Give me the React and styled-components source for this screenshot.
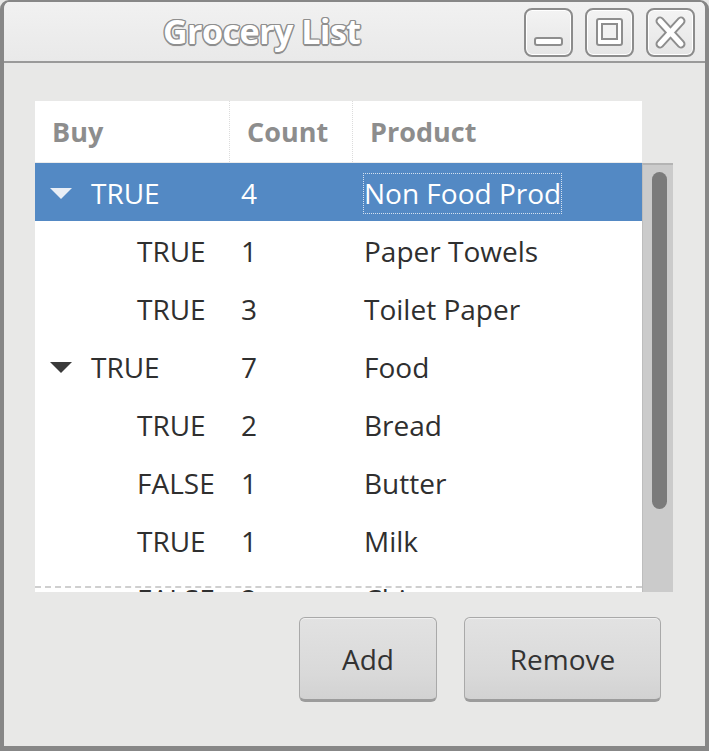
import React from "react";
import styled, { createGlobalStyle } from "styled-components";

const GlobalStyle = createGlobalStyle`
  html, body {
    margin: 0;
    padding: 0;
    background: #e8e8e7;
  }
  * { box-sizing: border-box; }
`;

const items = [
  { buy: "TRUE", count: 4, product: "Non Food Prod", level: 0, open: true, selected: true },
  { buy: "TRUE", count: 1, product: "Paper Towels", level: 1 },
  { buy: "TRUE", count: 3, product: "Toilet Paper", level: 1 },
  { buy: "TRUE", count: 7, product: "Food", level: 0, open: true },
  { buy: "TRUE", count: 2, product: "Bread", level: 1 },
  { buy: "FALSE", count: 1, product: "Butter", level: 1 },
  { buy: "TRUE", count: 1, product: "Milk", level: 1 },
  { buy: "FALSE", count: 2, product: "Chips", level: 1 },
];

function App() {
  return (
    <>
      <GlobalStyle />
      <Window>
        <TitleBar>
          <Title>Grocery List</Title>
          <Controls>
            <CtrlButton>
              <svg width="45" height="45" viewBox="0 0 45 45">
                <rect x="9" y="28" width="27" height="7" rx="2" fill="#fff" stroke="#8e8e8e" strokeWidth="2" />
              </svg>
            </CtrlButton>
            <CtrlButton>
              <svg width="45" height="45" viewBox="0 0 45 45">
                <rect x="10" y="9" width="25" height="26" rx="2" fill="#fff" stroke="#8e8e8e" strokeWidth="2" />
                <rect x="15" y="14" width="15" height="15" fill="#f2f2f2" stroke="#8e8e8e" strokeWidth="2" />
              </svg>
            </CtrlButton>
            <CtrlButton>
              <svg width="45" height="45" viewBox="0 0 45 45">
                <path d="M12 11 L33 34 M33 11 L12 34" stroke="#8e8e8e" strokeWidth="9" strokeLinecap="round" />
                <path d="M12 11 L33 34 M33 11 L12 34" stroke="#fff" strokeWidth="5" strokeLinecap="round" />
              </svg>
            </CtrlButton>
          </Controls>
        </TitleBar>

        <Body>
          <Tree>
            <Header>
              <HeadCell>Buy</HeadCell>
              <HeadCell>Count</HeadCell>
              <HeadCell $last>Product</HeadCell>
            </Header>
            <Viewport>
              {items.map((it, i) => (
                <Row key={i} $selected={it.selected}>
                  <BuyCell $level={it.level}>
                    <Arrow $selected={it.selected}>
                      {it.open && (
                        <svg width="22" height="11" viewBox="0 0 22 11">
                          <path d="M0 0 L22 0 L11 11 Z" fill="currentColor" />
                        </svg>
                      )}
                    </Arrow>
                    {it.buy}
                  </BuyCell>
                  <Cell>{it.count}</Cell>
                  <Cell>
                    <Label $focus={it.selected}>{it.product}</Label>
                  </Cell>
                </Row>
              ))}
            </Viewport>
            <Scrollbar>
              <Thumb />
            </Scrollbar>
          </Tree>

          <Actions>
            <PushButton $w={138}>Add</PushButton>
            <PushButton $w={197}>Remove</PushButton>
          </Actions>
        </Body>
      </Window>
    </>
  );
}

export default App;

const Window = styled.div`
  width: 709px;
  height: 751px;
  display: flex;
  flex-direction: column;
  background: #e8e8e7;
  border: 2px solid #878787;
  border-left-width: 4px;
  border-right-width: 4px;
  border-bottom-width: 5px;
  border-radius: 9px 9px 0 0;
  overflow: hidden;
  font-family: "Open Sans", "Noto Sans", sans-serif;
`;

const TitleBar = styled.div`
  height: 61px;
  flex: none;
  display: flex;
  align-items: center;
  justify-content: space-between;
  padding: 0 10px 0 159px;
  background: linear-gradient(#f1f1f1, #e9e9e9);
  border-bottom: 2px solid #9a9a9a;
`;

const Title = styled.div`
  font-family: "Open Sans", "Noto Sans", sans-serif;
  font-weight: 700;
  font-size: 34px;
  letter-spacing: -0.5px;
  color: #fff;
  margin-top: -1px;
  text-shadow:
    1.5px 0 0 #8f8f8f, -1.5px 0 0 #8f8f8f, 0 1.5px 0 #8f8f8f, 0 -1.5px 0 #8f8f8f,
    1px 1px 0 #8f8f8f, -1px -1px 0 #8f8f8f, 1px -1px 0 #8f8f8f, -1px 1px 0 #8f8f8f,
    0 2px 1px #b0b0b0;
`;

const Controls = styled.div`
  display: flex;
  gap: 12px;
  margin-top: 2px;
`;

const CtrlButton = styled.div`
  width: 49px;
  height: 49px;
  border: 2px solid #8c8c8c;
  border-radius: 8px;
  background: linear-gradient(#f3f3f3, #e6e6e6);
  box-shadow: inset 0 0 0 1px #fff;
  display: flex;
  align-items: center;
  justify-content: center;
`;

const Body = styled.div`
  flex: 1;
  display: flex;
  flex-direction: column;
  padding: 38px 0 0 31px;
`;

const Tree = styled.div`
  display: grid;
  grid-template-columns: 607px 31px;
  grid-template-rows: 62px 429px;
`;

const Header = styled.div`
  grid-column: 1;
  grid-row: 1;
  display: grid;
  grid-template-columns: 195px 123px 1fr;
  background: #fff;
  border-bottom: 1px solid #ececec;
`;

const HeadCell = styled.div`
  display: flex;
  align-items: center;
  padding-left: 17px;
  font-size: 27px;
  font-weight: 700;
  color: #8d8d8d;
  border-right: ${(p) => (p.$last ? "none" : "1px dotted #dcdcdc")};
`;

const Viewport = styled.div`
  grid-column: 1;
  grid-row: 2;
  position: relative;
  overflow: hidden;
  background: #fff;
  &::after {
    content: "";
    position: absolute;
    left: 0;
    right: 0;
    bottom: 4px;
    border-bottom: 2px dashed #cfcfcf;
  }
`;

const Row = styled.div`
  height: 58px;
  padding-top: 2px;
  display: grid;
  grid-template-columns: 195px 123px 1fr;
  align-items: center;
  font-size: 28px;
  color: ${(p) => (p.$selected ? "#fff" : "#2f2f2f")};
  background: ${(p) => (p.$selected ? "#5389c4" : "transparent")};
`;

const BuyCell = styled.div`
  display: flex;
  align-items: center;
  padding-left: ${(p) => 15 + p.$level * 46}px;
`;

const Arrow = styled.span`
  width: 22px;
  height: 11px;
  margin-right: 19px;
  display: flex;
  color: ${(p) => (p.$selected ? "#e8eef6" : "#3a3a3a")};
`;

const Cell = styled.div`
  padding-left: 11px;
`;

const Label = styled.span`
  display: inline-block;
  line-height: 39px;
  outline: ${(p) => (p.$focus ? "1px dotted rgba(255,255,255,0.75)" : "none")};
  outline-offset: 0;
`;

const Scrollbar = styled.div`
  grid-column: 2;
  grid-row: 2;
  background: #cbcbcb;
  border-top: 2px solid #b4b4b4;
  border-left: 1px solid #bdbdbd;
  padding: 7px 6px 0 9px;
`;

const Thumb = styled.div`
  width: 15px;
  height: 337px;
  border-radius: 8px;
  background: #7b7b7b;
`;

const Actions = styled.div`
  display: flex;
  justify-content: flex-end;
  gap: 27px;
  padding: 25px 44px 0 0;
`;

const PushButton = styled.div`
  width: ${(p) => p.$w}px;
  height: 85px;
  display: flex;
  align-items: center;
  justify-content: center;
  font-size: 28px;
  color: #333;
  border: 1px solid #a9a9a9;
  border-bottom: 3px solid #9c9c9c;
  border-radius: 6px;
  background: linear-gradient(#e2e2e2, #d9d9d9 70%, #d2d2d2);
  box-shadow: inset 0 1px 0 #efefef;
`;
